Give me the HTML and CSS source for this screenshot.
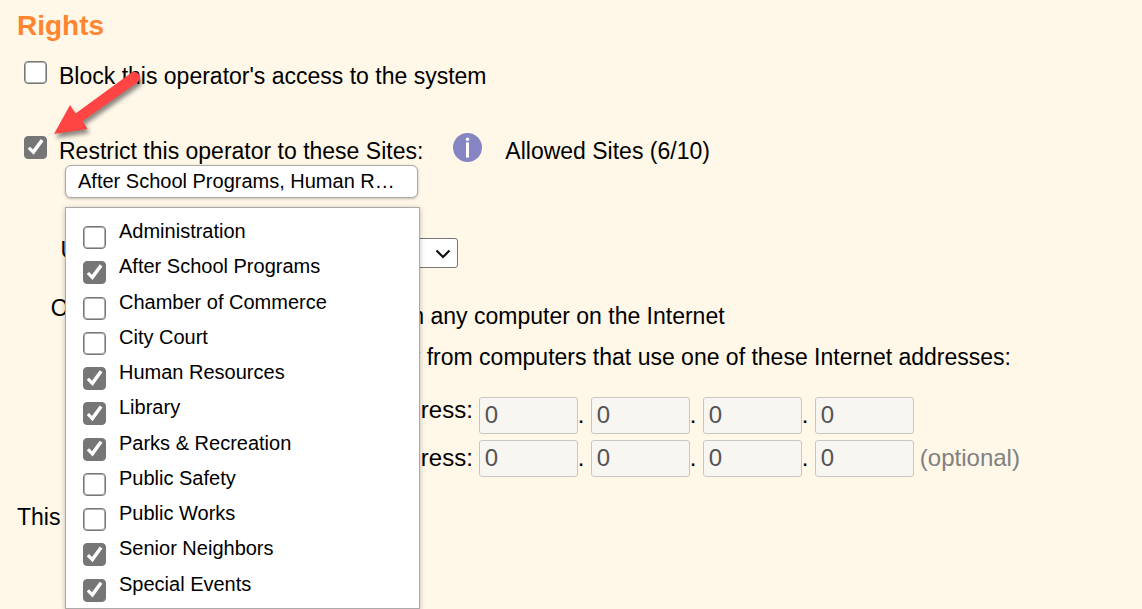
FILE: index.html
```html
<!DOCTYPE html>
<html lang="en">
<head>
    <meta charset="utf-8">
    <title>Operator Rights</title>
    <link rel="stylesheet" href="styles.css">
</head>
<body>

<main class="rights">
    <h2>Rights</h2>

    <div class="option block-option">
        <input type="checkbox" class="check" id="block">
        <label for="block">Block this operator's access to the system</label>
    </div>

    <div class="option">
        <input type="checkbox" class="check" id="restrict" checked>
        <label for="restrict">Restrict this operator to these Sites:</label>
        <svg class="info" viewBox="0 0 29 29" role="img" aria-label="Information">
            <circle cx="14.5" cy="14.5" r="14.5" fill="#8784c4"/>
            <circle cx="14.5" cy="6.2" r="1.7" fill="#fff"/>
            <path d="M14.5 9.4V24.6" stroke="#fff" stroke-width="3"/>
        </svg>
        <span>Allowed Sites (6/10)</span>

        <!-- callout arrow -->
        <svg class="arrow" viewBox="0 0 100 80" aria-hidden="true">
            <path d="M4 64L20 35L25.500 43.500L81 3Q86 0 89 4.500Q91 9 88 12L32.500 51L37.500 59Z" fill="#ff4444"/>
        </svg>
    </div>

    <!-- sites drop-down -->
    <div class="sites">
        <button type="button" class="sites-button" aria-expanded="true" aria-controls="sitesMenu">After School Programs, Human Resources, Library, Parks &amp; Recreation</button>
        <div class="sites-menu" id="sitesMenu">
            <label><input type="checkbox" class="check">Administration</label>
            <label><input type="checkbox" class="check" checked>After School Programs</label>
            <label><input type="checkbox" class="check">Chamber of Commerce</label>
            <label><input type="checkbox" class="check">City Court</label>
            <label><input type="checkbox" class="check" checked>Human Resources</label>
            <label><input type="checkbox" class="check" checked>Library</label>
            <label><input type="checkbox" class="check" checked>Parks &amp; Recreation</label>
            <label><input type="checkbox" class="check">Public Safety</label>
            <label><input type="checkbox" class="check">Public Works</label>
            <label><input type="checkbox" class="check" checked>Senior Neighbors</label>
            <label><input type="checkbox" class="check" checked>Special Events</label>
        </div>
    </div>

    <div class="settings">
        <label class="name" for="pages">User's default pages:</label>
        <div class="select-box">
            <select id="pages"><option>Standard</option></select>
            <svg viewBox="0 0 16 10" aria-hidden="true"><path d="M1.500 1.500L8 8L14.500 1.500" fill="none" stroke="#111" stroke-width="2.200"/></svg>
        </div>

        <span class="name" id="signIn">Operators can sign in:</span>
        <div class="access" role="radiogroup" aria-labelledby="signIn">
            <label class="radio"><input type="radio" name="access" checked>Use from any computer on the Internet</label>
            <label class="radio"><input type="radio" name="access">Use only from computers that use one of these Internet addresses:</label>
            <div class="addresses">
                <div class="address-names">
                    <label for="first">First address:</label>
                    <label for="last">Last address:</label>
                </div>
                <div class="address-rows">
                    <div class="address">
                        <input type="text" id="first" value="0" disabled><span>.</span>
                        <input type="text" value="0" aria-label="First address, part 2" disabled><span>.</span>
                        <input type="text" value="0" aria-label="First address, part 3" disabled><span>.</span>
                        <input type="text" value="0" aria-label="First address, part 4" disabled>
                    </div>
                    <div class="address">
                        <input type="text" id="last" value="0" disabled><span>.</span>
                        <input type="text" value="0" aria-label="Last address, part 2" disabled><span>.</span>
                        <input type="text" value="0" aria-label="Last address, part 3" disabled><span>.</span>
                        <input type="text" value="0" aria-label="Last address, part 4" disabled>
                        <em>(optional)</em>
                    </div>
                </div>
            </div>
        </div>

        <label class="name" for="language">This operator's language:</label>
        <select id="language" class="language"><option>English</option></select>
    </div>
</main>

</body>
</html>
```
FILE: styles.css
```css
* {
    box-sizing: border-box;
}

body {
    min-height: 100vh;
    margin: 0;
    background-color: #fff7e8;
    color: #000;
    font-family: "Liberation Sans", Arial, sans-serif;
    font-size: 23px;
    line-height: 30px;
}

.rights {
    padding: 11px 17px 0;
}

h2 {
    margin: 0 0 19px;
    color: #ff862f;
    font-size: 28px;
    line-height: 30px;
}

/* checkboxes */
.check {
    appearance: none;
    flex: none;
    width: 23px;
    height: 23px;
    margin: 0;
    border: 1px solid #767676;
    border-radius: 4px;
    background-color: #fff;
    box-shadow: inset 0 0 0 1px #b0b0b0;
}

.check:checked {
    background-color: #767676;
    box-shadow: none;
}

.check:checked::before {
    content: "";
    display: block;
    width: 21px;
    height: 21px;
    background-color: #fff;
    clip-path: polygon(13% 56%, 24% 46%, 38% 60%, 75% 10%, 88% 20%, 41% 85%);
}

.option {
    position: relative;
    display: flex;
    align-items: flex-start;
    padding: 1px 0 0 7px;
}

.option .check {
    margin-right: 12px;
}

.block-option {
    margin-bottom: 44px;
}

.info {
    width: 29px;
    height: 29px;
    margin: -3px 23px 0 30px;
}

.arrow {
    position: absolute;
    top: -65px;
    left: 33px;
    width: 100px;
    height: 80px;
    overflow: visible;
    filter: drop-shadow(2px 4px 2px rgba(0, 0, 0, .45));
    pointer-events: none;
    z-index: 2;
}

/* sites drop-down */
.sites {
    position: relative;
    width: 355px;
    margin: -1px 0 37px 48px;
}

.sites-button {
    display: block;
    width: 353px;
    height: 33px;
    padding: 0 12px 2px;
    overflow: hidden;
    border: 1px solid #aaa;
    border-radius: 6px;
    background: #fff;
    color: #000;
    box-shadow: 0 1px 3px rgba(0, 0, 0, .25);
    font: inherit;
    font-size: 20px;
    text-align: left;
    text-overflow: ellipsis;
    white-space: nowrap;
}

.sites-menu {
    position: absolute;
    top: 42px;
    left: 0;
    z-index: 1;
    display: flex;
    flex-direction: column;
    width: 100%;
    height: 402px;
    padding: 6px 17px;
    border: 1px solid #aaa;
    background: #fff;
    box-shadow: 0 1px 5px rgba(0, 0, 0, .25);
    font-size: 20px;
    line-height: 34px;
}

.sites-menu label {
    display: flex;
    flex: 1;
    gap: 13px;
}

.sites-menu .check {
    margin-top: 12px;
}

/* settings under the drop-down */
.settings {
    display: grid;
    grid-template-columns: max-content 1fr;
    gap: 25px 19px;
    align-items: start;
    padding-bottom: 80px;
}

.name {
    text-align: right;
}

.select-box {
    position: relative;
    width: 163px;
    margin-top: 3px;
}

select {
    appearance: none;
    display: block;
    width: 100%;
    height: 30px;
    padding: 0 6px;
    border: 1px solid #767676;
    border-radius: 3px;
    background: #fff;
    color: #000;
    font: inherit;
    font-size: 20px;
}

.select-box svg {
    position: absolute;
    top: 11px;
    right: 7px;
    width: 16px;
    height: 10px;
    pointer-events: none;
}

.access {
    padding-top: 8px;
}

.radio {
    display: flex;
    align-items: center;
    gap: 13px;
    margin-bottom: 11px;
}

.radio input {
    width: 23px;
    height: 23px;
    margin: 0;
}

.addresses {
    display: flex;
    gap: 6px;
    margin-top: 22px;
    font-size: 24px;
}

.address-names {
    display: flex;
    flex-direction: column;
    gap: 18px;
    width: 178px;
    padding-top: 1px;
    text-align: right;
}

.address-rows {
    display: flex;
    flex-direction: column;
    gap: 6px;
    padding-top: 3px;
}

.address {
    display: flex;
    align-items: baseline;
}

.address input {
    width: 99px;
    height: 37px;
    padding: 0 5px 2px;
    border: 1px solid #c8c7c1;
    border-radius: 3px;
    background: #f7f6f1;
    color: #545454;
    font: inherit;
}

.address span {
    width: 13px;
}

.address em {
    margin-left: 6px;
    color: #808080;
    font-style: normal;
}

.language {
    width: 120px;
}
```
